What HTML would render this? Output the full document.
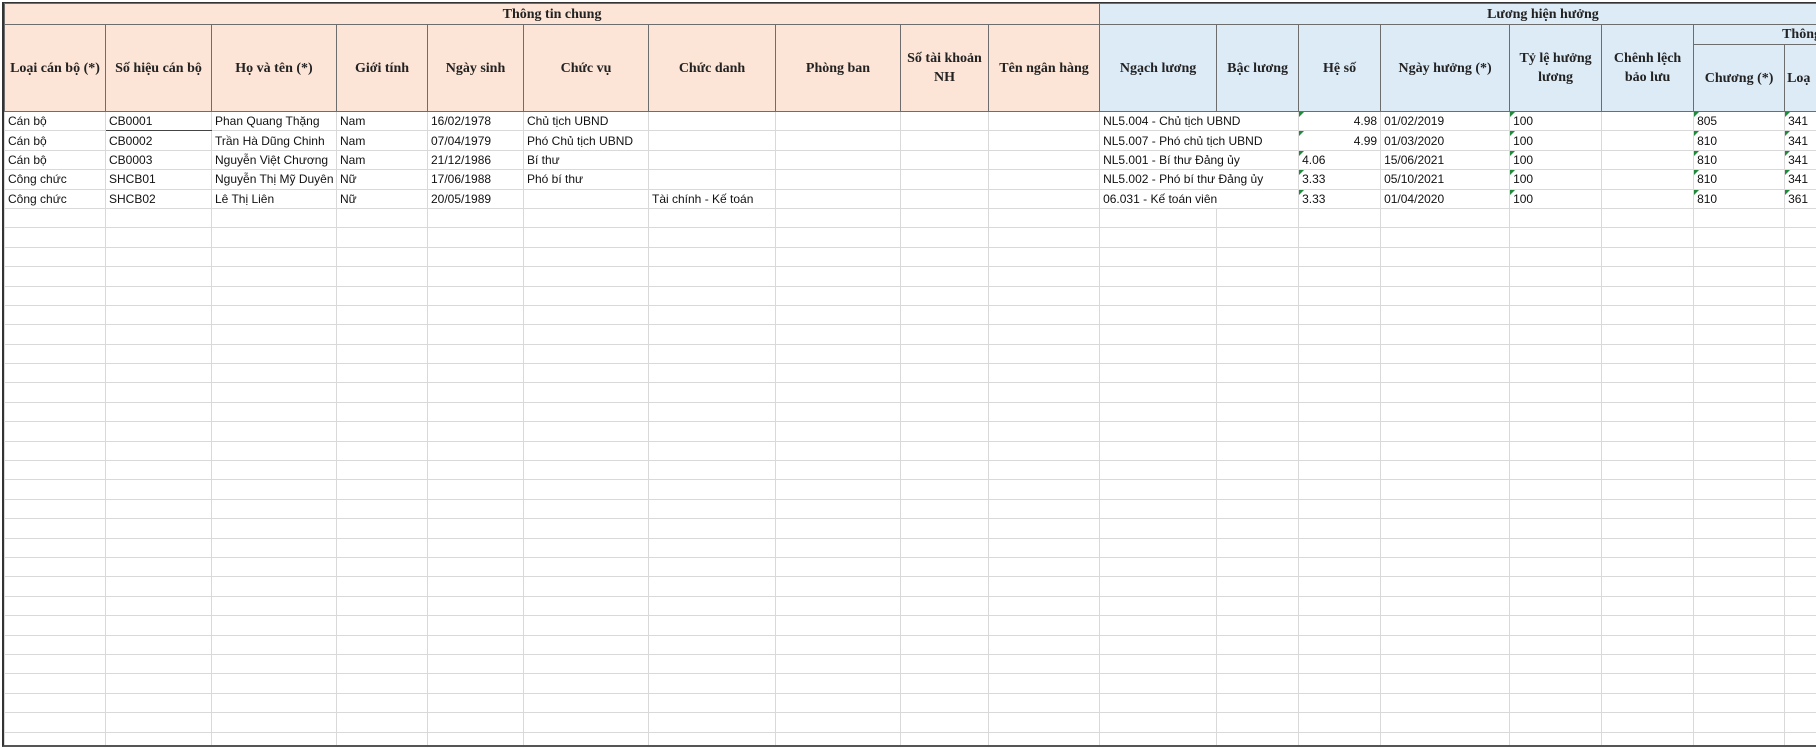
<!DOCTYPE html>
<html><head><meta charset="utf-8">
<style>
html,body{margin:0;padding:0;background:#fff;width:1816px;height:749px;overflow:hidden}
.wrap{position:absolute;left:2px;top:2px;width:1814px;height:745px;border-left:2px solid #333;border-top:1px solid #333;border-bottom:2px solid #555;overflow:hidden;box-sizing:border-box}
table{border-collapse:collapse;table-layout:fixed;position:absolute;left:0;top:0;width:1813px}
td{padding:0 3px;white-space:nowrap;overflow:hidden;font-family:"Liberation Sans",sans-serif;font-size:12px;color:#111;border:1px solid #d9d9d9;height:18.4px;line-height:18px;position:relative}
th{font-family:"Liberation Serif",serif;font-weight:bold;font-size:14px;color:#222;border:1px solid #6d6d6d;padding:0 2px;line-height:19px;overflow:hidden;white-space:nowrap}
.p{background:#FCE4D6}.b{background:#DDEBF7}
.r{text-align:right}
.g::before{content:"";position:absolute;left:0;top:0;border-top:5px solid #1e8a3a;border-right:5px solid transparent}
</style></head><body>
<div class="wrap">
<table>
<colgroup>
<col style="width:101px"><col style="width:106px"><col style="width:125px"><col style="width:91px"><col style="width:96px"><col style="width:125px"><col style="width:127px"><col style="width:125px"><col style="width:88px"><col style="width:111px"><col style="width:117px"><col style="width:82px"><col style="width:82px"><col style="width:129px"><col style="width:92px"><col style="width:92px"><col style="width:91px"><col style="width:33px">
</colgroup>
<tr style="height:21px"><th class="p" colspan="10">Thông tin chung</th><th class="b" colspan="8" style="text-align:left;padding-left:387px">Lương hiện hưởng</th></tr>
<tr style="height:20px">
<th class="p" rowspan="2">Loại cán bộ (*)</th><th class="p" rowspan="2">Số hiệu cán bộ</th><th class="p" rowspan="2">Họ và tên (*)</th><th class="p" rowspan="2">Giới tính</th><th class="p" rowspan="2">Ngày sinh</th><th class="p" rowspan="2">Chức vụ</th><th class="p" rowspan="2">Chức danh</th><th class="p" rowspan="2">Phòng ban</th><th class="p" rowspan="2" style="white-space:normal">Số tài khoản NH</th><th class="p" rowspan="2">Tên ngân hàng</th>
<th class="b" rowspan="2">Ngạch lương</th><th class="b" rowspan="2">Bậc lương</th><th class="b" rowspan="2">Hệ số</th><th class="b" rowspan="2">Ngày hưởng (*)</th><th class="b" rowspan="2" style="white-space:normal">Tỷ lệ hưởng lương</th><th class="b" rowspan="2" style="white-space:normal">Chênh lệch bảo lưu</th>
<th class="b" colspan="2" style="text-align:left;padding-left:88px;border-right:none">Thông</th></tr>
<tr style="height:67px"><th class="b">Chương (*)</th><th class="b" style="text-align:left">Loạ</th></tr>
<tr><td>Cán bộ</td><td style="border-bottom:1px solid #444">CB0001</td><td>Phan Quang Thặng</td><td>Nam</td><td>16/02/1978</td><td>Chủ tịch UBND</td><td></td><td></td><td></td><td></td><td colspan="2">NL5.004 - Chủ tịch UBND</td><td class="r g">4.98</td><td>01/02/2019</td><td class="g">100</td><td></td><td class="g">805</td><td class="g">341</td></tr>
<tr><td>Cán bộ</td><td>CB0002</td><td>Trần Hà Dũng Chinh</td><td>Nam</td><td>07/04/1979</td><td>Phó Chủ tịch UBND</td><td></td><td></td><td></td><td></td><td colspan="2">NL5.007 - Phó chủ tịch UBND</td><td class="r g" style="border-top:1px solid #444">4.99</td><td>01/03/2020</td><td class="g">100</td><td></td><td class="g">810</td><td class="g">341</td></tr>
<tr><td>Cán bộ</td><td>CB0003</td><td>Nguyễn Việt Chương</td><td>Nam</td><td>21/12/1986</td><td>Bí thư</td><td></td><td></td><td></td><td></td><td colspan="2">NL5.001 - Bí thư Đảng ủy</td><td class="g">4.06</td><td>15/06/2021</td><td class="g">100</td><td></td><td class="g">810</td><td class="g">341</td></tr>
<tr><td>Công chức</td><td>SHCB01</td><td>Nguyễn Thị Mỹ Duyên</td><td>Nữ</td><td>17/06/1988</td><td>Phó bí thư</td><td></td><td></td><td></td><td></td><td colspan="2">NL5.002 - Phó bí thư Đảng ủy</td><td class="g">3.33</td><td>05/10/2021</td><td class="g">100</td><td></td><td class="g">810</td><td class="g">341</td></tr>
<tr><td>Công chức</td><td>SHCB02</td><td>Lê Thị Liên</td><td>Nữ</td><td>20/05/1989</td><td></td><td>Tài chính - Kế toán</td><td></td><td></td><td></td><td colspan="2">06.031 - Kế toán viên</td><td class="g">3.33</td><td>01/04/2020</td><td class="g">100</td><td></td><td class="g">810</td><td class="g">361</td></tr>
<tbody id="e"></tbody>
</table>
</div>
<script>
var s="";for(var i=0;i<28;i++){s+="<tr>";for(var j=0;j<18;j++)s+="<td></td>";s+="</tr>";}
document.getElementById("e").innerHTML=s;
</script>
</body></html>
